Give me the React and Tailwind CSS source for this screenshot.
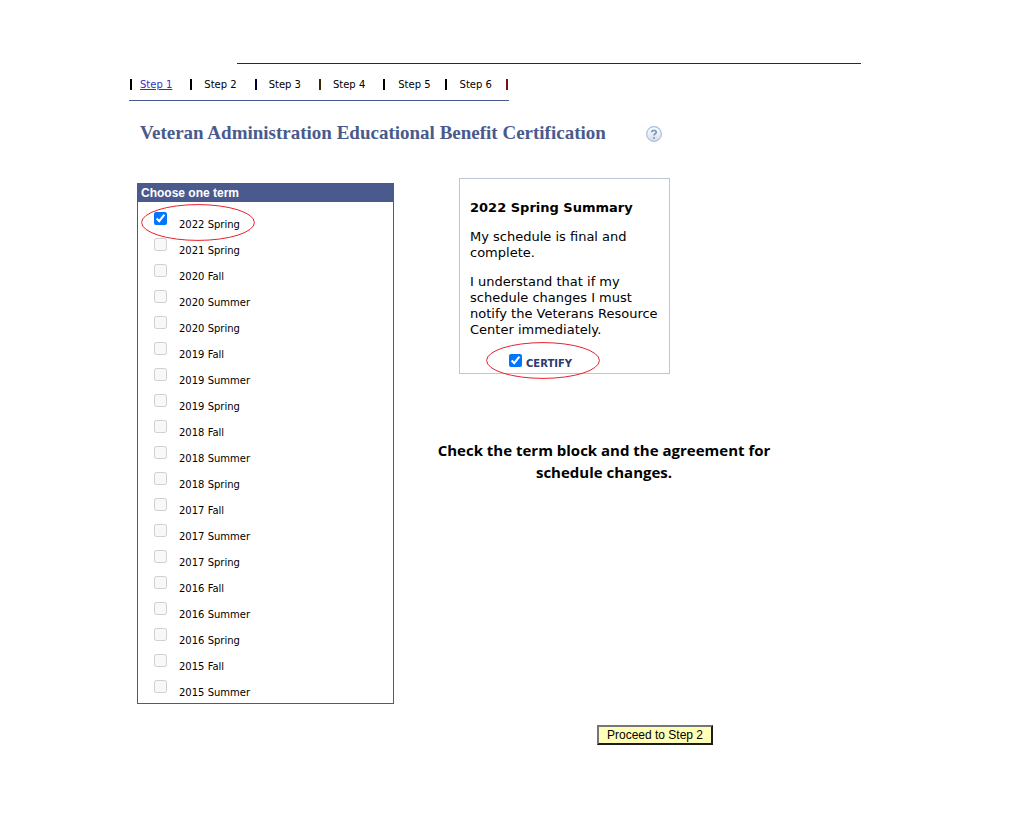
import React, { useState } from 'react';

const TERMS = [
  '2022 Spring',
  '2021 Spring',
  '2020 Fall',
  '2020 Summer',
  '2020 Spring',
  '2019 Fall',
  '2019 Summer',
  '2019 Spring',
  '2018 Fall',
  '2018 Summer',
  '2018 Spring',
  '2017 Fall',
  '2017 Summer',
  '2017 Spring',
  '2016 Fall',
  '2016 Summer',
  '2016 Spring',
  '2015 Fall',
  '2015 Summer'
];

const STEPS = [
  { label: 'Step 1', bar: 'border-black', pad: 'pl-2 pr-[18px]' },
  { label: 'Step 2', bar: 'border-black', pad: 'pl-3 pr-[18px]' },
  { label: 'Step 3', bar: 'border-[#00003a]', pad: 'pl-3 pr-[18px]' },
  { label: 'Step 4', bar: 'border-[#3a2600]', pad: 'pl-3 pr-[18px]' },
  { label: 'Step 5', bar: 'border-black', pad: 'pl-[13px] pr-[14px]' },
  { label: 'Step 6', bar: 'border-black', pad: 'pl-[13px] pr-[14px]' }
];

function StepNav() {
  return (
    <nav className="mt-[15px] ml-[129px] w-fit border-b border-[#4a5a8c] px-px pb-[10px]">
      <ol className="flex text-[10px] leading-[11px]">
        {STEPS.map((step, i) => (
          <li key={step.label} className={`border-l-2 ${step.bar} ${step.pad}`}>
            {i === 0 ? (
              <a href="#step-1" className="text-[#3a2fc4] underline">{step.label}</a>
            ) : (
              step.label
            )}
          </li>
        ))}
        <li aria-hidden="true" className="border-l-2 border-[#7a1018]" />
      </ol>
    </nav>
  );
}

function HelpIcon() {
  return (
    <svg viewBox="0 0 16 16" className="size-4" aria-hidden="true">
      <defs>
        <linearGradient id="helpFill" x1="0" y1="0" x2="0" y2="1">
          <stop offset="0" stopColor="#ffffff" />
          <stop offset="1" stopColor="#d8dde4" />
        </linearGradient>
      </defs>
      <circle cx="8" cy="8" r="7.4" fill="url(#helpFill)" stroke="#a3bfdf" strokeWidth="1.1" />
      <path d="M5.7 6.2V5.6Q6.2 4.3 8 4.3T10.3 6Q10.3 7 9.2 7.7T8 9.5" fill="none" stroke="#7499c9" strokeWidth="1.7" />
      <path d="M7.1 11h1.8v1.7H7.1z" fill="#7499c9" />
    </svg>
  );
}

function Circled({ className }) {
  return (
    <svg viewBox="0 0 114 37" className={`pointer-events-none absolute h-[37px] w-[114px] ${className}`} aria-hidden="true">
      <ellipse cx="57" cy="18.5" rx="56.4" ry="17.9" fill="none" stroke="#e8202c" />
    </svg>
  );
}

function TermList({ selected, onSelect }) {
  return (
    <section aria-labelledby="term-heading" className="mt-[5px] w-[257px] shrink-0 border border-[#4a5a8c]">
      <h2
        id="term-heading"
        className="bg-[#4a5a8c] px-[3px] font-['Liberation_Sans',Arial,sans-serif] text-xs leading-[18px] font-bold text-white"
      >
        Choose one term
      </h2>
      <ul className="pt-[6px] pb-px">
        {TERMS.map((term, i) => (
          <li key={term} className="relative h-[26px] pl-4">
            <label className="flex w-fit items-start gap-3 text-[10px] leading-4">
              <input
                type="checkbox"
                className="mt-1 size-[13px]"
                checked={selected === term}
                disabled={i > 0}
                onChange={() => onSelect(selected === term ? null : term)}
              />
              <span className="pt-[9px]">{term}</span>
            </label>
            {i === 0 && <Circled className="top-[-4px] left-[3px]" />}
          </li>
        ))}
      </ul>
    </section>
  );
}

function Summary({ certified, onCertify }) {
  return (
    <section className="ml-[22px] w-[211px] border border-[#bfc5d8] px-[10px] text-[13px] leading-4">
      <h2 className="mt-[21px] font-bold">2022 Spring Summary</h2>
      <p className="mt-[13px]">My schedule is final and complete.</p>
      <p className="mt-[13px]">
        I understand that if my schedule changes I must notify the Veterans Resource Center immediately.
      </p>
      <div className="relative mt-4 h-[19px] pl-[39px]">
        <label className="flex w-fit items-start gap-1 text-[10px] font-bold text-[#2c3a6e]">
          <input
            type="checkbox"
            className="size-[13px]"
            checked={certified}
            onChange={e => onCertify(e.target.checked)}
          />
          <span className="leading-5">CERTIFY</span>
        </label>
        <Circled className="top-[-12px] left-4" />
      </div>
    </section>
  );
}

export default function App() {
  const [term, setTerm] = useState(TERMS[0]);
  const [certified, setCertified] = useState(true);

  return (
    <div className="min-h-screen bg-white pt-[63px] font-['DejaVu_Sans',Verdana,sans-serif] text-black">
      <hr className="mr-[163px] ml-[237px] border-t border-[#1f2f3a]" />
      <StepNav />

      <header className="mt-[21px] ml-[140px] flex h-6 items-center">
        <h1 className="w-[506px] pb-0.5 font-['Liberation_Serif',Georgia,serif] text-[19px] leading-5 font-bold whitespace-nowrap text-[#4a5a8c]">
          Veteran Administration Educational Benefit Certification
        </h1>
        <button type="button" aria-label="Help">
          <HelpIcon />
        </button>
      </header>

      <main className="mt-8 ml-[137px] flex items-stretch gap-[43px]">
        <TermList selected={term} onSelect={setTerm} />
        <div className="w-[334px]">
          <Summary certified={certified} onCertify={setCertified} />
          <p className="mt-[65px] text-center font-['Open_Sans','Segoe_UI',sans-serif] text-[15px] leading-[22px] font-bold">
            Check the term block and the agreement for schedule changes.
          </p>
        </div>
      </main>

      <div className="mt-[21px] ml-[597px]">
        <button
          type="button"
          className="block h-5 w-[116px] border-2 border-t-[#767676] border-r-[#1c1c1c] border-b-[#1c1c1c] border-l-[#767676] bg-[#ffffb5] font-['Liberation_Sans',Arial,sans-serif] text-xs leading-4 whitespace-nowrap"
        >
          Proceed to Step 2
        </button>
      </div>
    </div>
  );
}
